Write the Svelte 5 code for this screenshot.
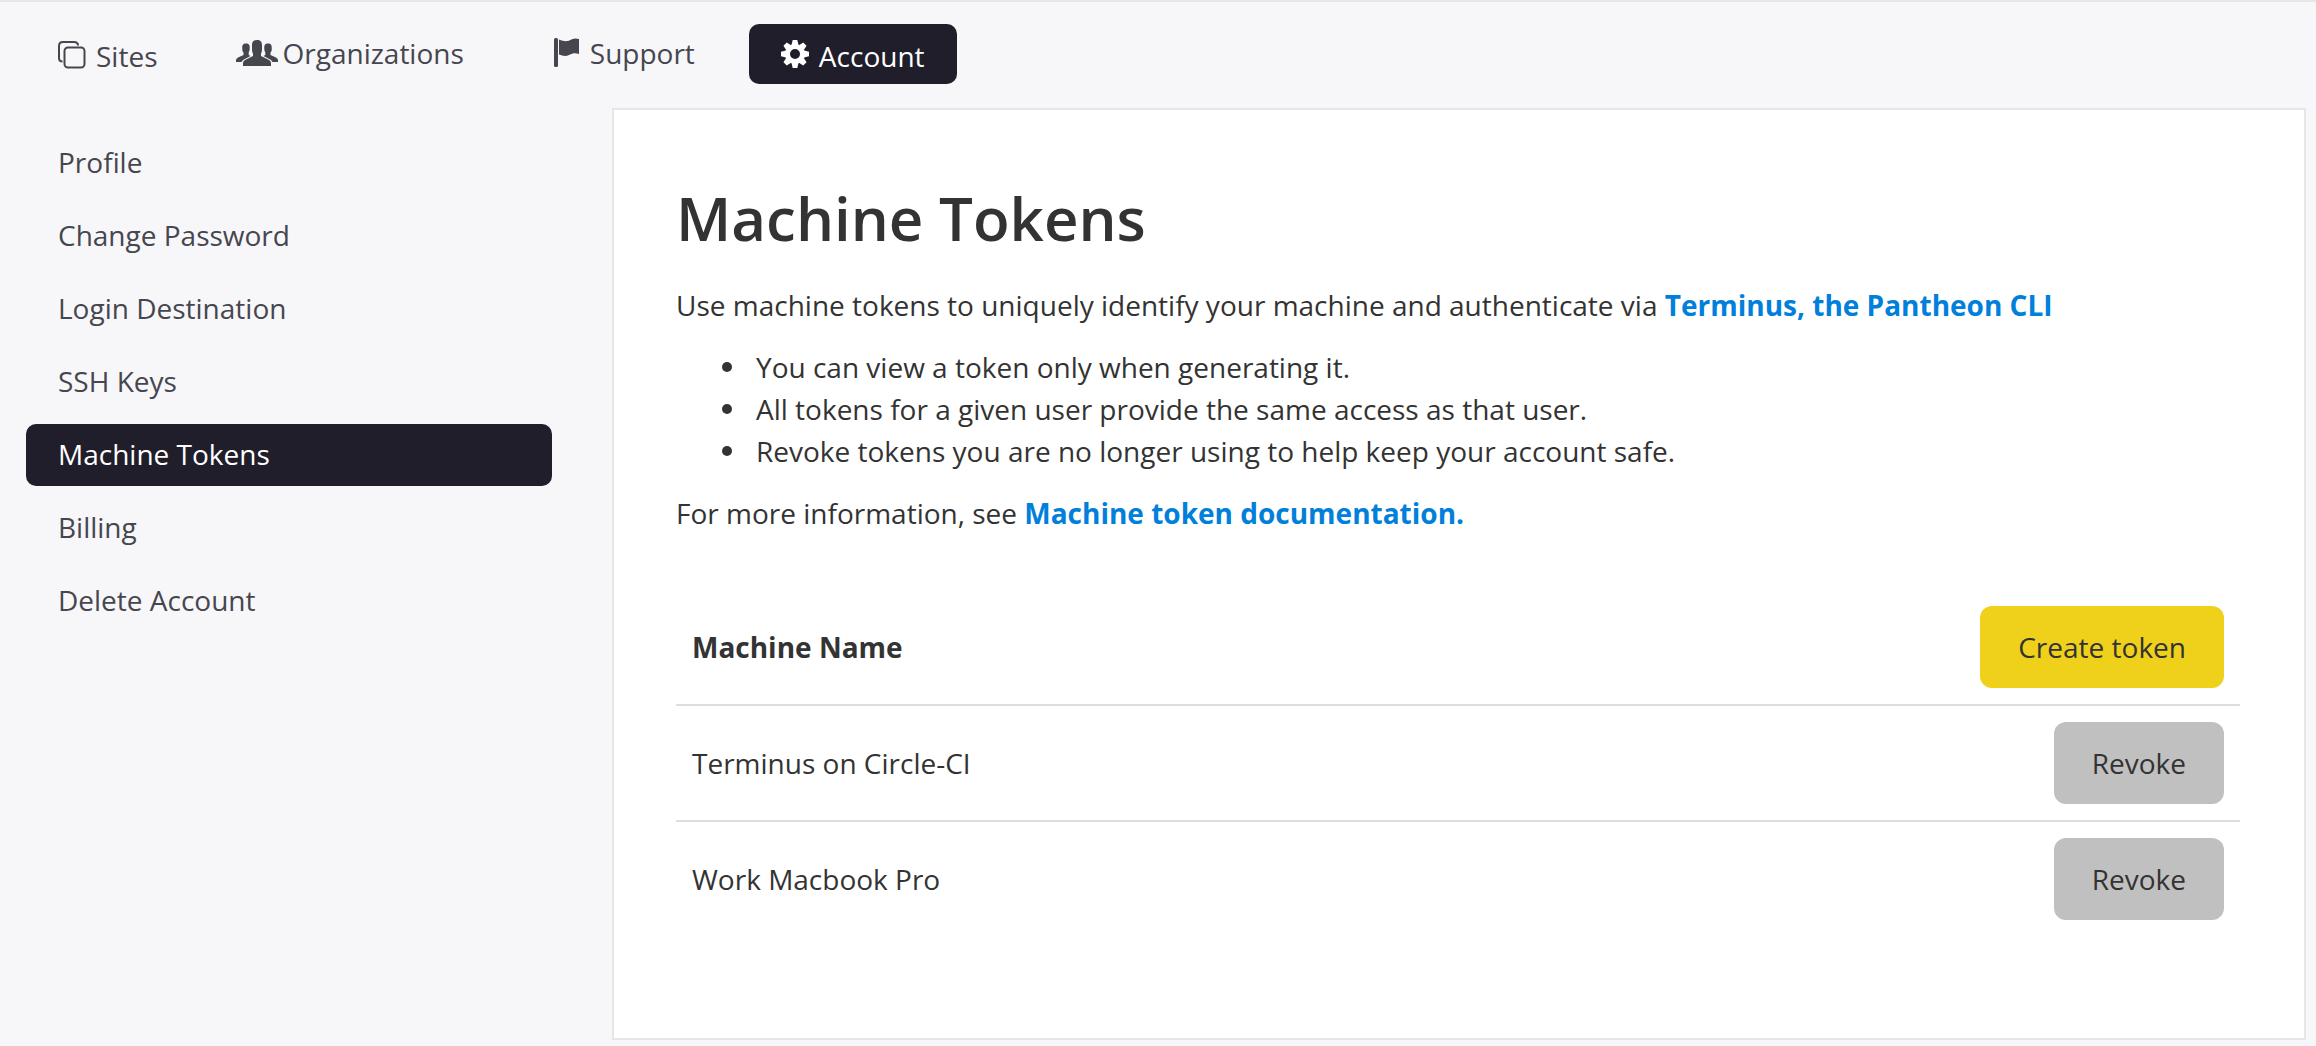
<script>
  const nav = [
    { label: 'Sites', icon: 'sites' },
    { label: 'Organizations', icon: 'group', glyph: true },
    { label: 'Support', icon: 'flag', glyph: true },
    { label: 'Account', icon: 'gear', active: true },
  ];
  const sections = [
    'Profile',
    'Change Password',
    'Login Destination',
    'SSH Keys',
    'Machine Tokens',
    'Billing',
    'Delete Account',
  ];
  const current = 'Machine Tokens';
  const machines = ['Terminus on Circle-CI', 'Work Macbook Pro'];
  const teeth = [0, 45, 90, 135, 180, 225, 270, 315];
</script>

<div class="page">
  <nav class="topnav" aria-label="Main">
    {#each nav as item}
      <a href="#{item.icon}" class:glyph={item.glyph} class:active={item.active}>
        {#if item.icon === 'sites'}
          <svg class="i-sites" viewBox="0 0 28 28" width="28" height="28" aria-hidden="true">
            <g fill="none" stroke="currentColor" stroke-width="2">
              <rect x="6.500" y="6.500" width="20" height="20" rx="3.500" />
              <path d="M4.500 20.500C2 20.500 1 19 1 17V5Q1 1 5 1H16Q20 1 20 4.500" />
            </g>
          </svg>
        {:else if item.icon === 'group'}
          <svg class="i-group" viewBox="0 0 42 26" width="42" height="26" aria-hidden="true">
            <g fill="currentColor">
              <path d="M21 0C24.500 0 26 2 26 5V10C26 12 25 13 25 14V16L33 20Q35 21 35 23V26H7V23Q7 21 9 20L17 16V14C17 13 16 12 16 10V5C16 2 17.500 0 21 0Z" />
              <path id="side" d="M10 3.500C13 3.500 14 5.500 13.700 8C14 10.500 13 11.500 12.700 12.500V15L14.500 16L7 20L5.500 22H0V20Q0 18.500 2 17.500L7.500 15V12.500C6.500 11.500 6 10.500 6.300 8C6 5.500 7 3.500 10 3.500Z" />
              <use href="#side" transform="translate(42 0) scale(-1 1)" />
            </g>
          </svg>
        {:else if item.icon === 'flag'}
          <svg class="i-flag" viewBox="0 0 26 30" width="26" height="30" aria-hidden="true">
            <rect x="0" y="1" width="4" height="29" rx="1.500" fill="currentColor" />
            <path d="M5 2.500C11 5 14 4.500 18 2.200Q21 1 25 2V17C21 15.500 19 16 15 18Q11 20 5 17.500Z" fill="currentColor" />
          </svg>
        {:else}
          <svg class="i-gear" viewBox="-14 -14 28 28" width="28" height="28" aria-hidden="true">
            <circle r="7.500" fill="none" stroke="currentColor" stroke-width="5" />
            {#each teeth as angle}
              <path d="M-3.500-9L-2.300-14H2.300L3.500-9Z" transform="rotate({angle})" fill="currentColor" />
            {/each}
          </svg>
        {/if}
        <span>{item.label}</span>
      </a>
    {/each}
  </nav>

  <div class="body">
    <nav class="side" aria-label="Account">
      {#each sections as section}
        <a href="#{section.toLowerCase().replaceAll(' ', '-')}" class:active={section === current}>{section}</a>
      {/each}
    </nav>

    <main>
      <h1>Machine Tokens</h1>
      <p>
        Use machine tokens to uniquely identify your machine and authenticate via
        <a href="#terminus">Terminus, the Pantheon CLI</a>
      </p>
      <ul>
        <li>You can view a token only when generating it.</li>
        <li>All tokens for a given user provide the same access as that user.</li>
        <li>Revoke tokens you are no longer using to help keep your account safe.</li>
      </ul>
      <p>For more information, see <a href="#docs">Machine token documentation.</a></p>

      <table>
        <thead>
          <tr>
            <th scope="col">Machine Name</th>
            <td><button type="button" class="create">Create token</button></td>
          </tr>
        </thead>
        <tbody>
          {#each machines as machine}
            <tr>
              <td>{machine}</td>
              <td><button type="button">Revoke</button></td>
            </tr>
          {/each}
        </tbody>
      </table>
    </main>
  </div>
</div>

<style>
  :global(body) {
    margin: 0;
    background: #f7f7f9;
  }
  .page {
    box-sizing: border-box;
    min-height: 100vh;
    border-top: 2px solid #e6e6e6;
    padding-bottom: 6px;
    display: flex;
    flex-direction: column;
    font: 28px/42px 'Open Sans', sans-serif;
    color: #333;
  }
  a {
    text-decoration: none;
  }
  .topnav {
    display: flex;
    align-items: flex-start;
    gap: 15px;
    padding: 22px 26px 24px;
  }
  .topnav a {
    display: flex;
    align-items: flex-start;
    padding: 11px 32px 7px;
    border-radius: 10px;
    color: #46464f;
  }
  .topnav a.glyph {
    padding: 8px 39px 10px 32px;
  }
  .topnav svg {
    display: block;
    flex: none;
  }
  .i-sites {
    margin: 6px 10px 0 0;
  }
  .i-group {
    margin: 8px 4px 0 0;
  }
  .i-flag {
    margin: 5px 10px 0 4px;
  }
  .i-gear {
    margin: 5px 10px 0 0;
  }
  .topnav a.active,
  .side a.active {
    background: #1f1e2a;
    color: #fff;
  }
  .body {
    flex: 1;
    display: flex;
    align-items: stretch;
  }
  .side {
    flex: none;
    width: 526px;
    padding: 24px 60px 0 26px;
    display: flex;
    flex-direction: column;
    gap: 11px;
  }
  .side a {
    padding: 9px 32px 11px;
    border-radius: 10px;
    color: #46464f;
  }
  main {
    flex: 1;
    margin-right: 10px;
    border: 2px solid #e6e6e6;
    background: #fff;
    padding: 68px 64px 60px 62px;
  }
  h1 {
    margin: 0 0 26px;
    font-size: 60px;
    line-height: 80px;
    font-weight: 600;
  }
  p {
    margin: 0;
  }
  p a {
    color: #0080db;
    font-weight: 700;
  }
  ul {
    margin: 20px 0;
    padding-left: 46px;
    list-style: none;
  }
  li {
    display: flex;
    align-items: center;
    gap: 24px;
  }
  li::before {
    content: '';
    flex: none;
    width: 10px;
    height: 10px;
    border-radius: 50%;
    background: #333;
  }
  table {
    width: 100%;
    margin-top: 56px;
    border-collapse: collapse;
  }
  th,
  td {
    padding: 16px;
    text-align: left;
  }
  td:last-child {
    text-align: right;
  }
  tbody tr {
    border-top: 2px solid #ddd;
  }
  button {
    display: inline-block;
    vertical-align: top;
    border: 0;
    border-radius: 12px;
    padding: 20px 38px;
    background: #c0c0c0;
    color: #333;
    font: inherit;
  }
  .create {
    background: #efd01b;
  }
</style>
